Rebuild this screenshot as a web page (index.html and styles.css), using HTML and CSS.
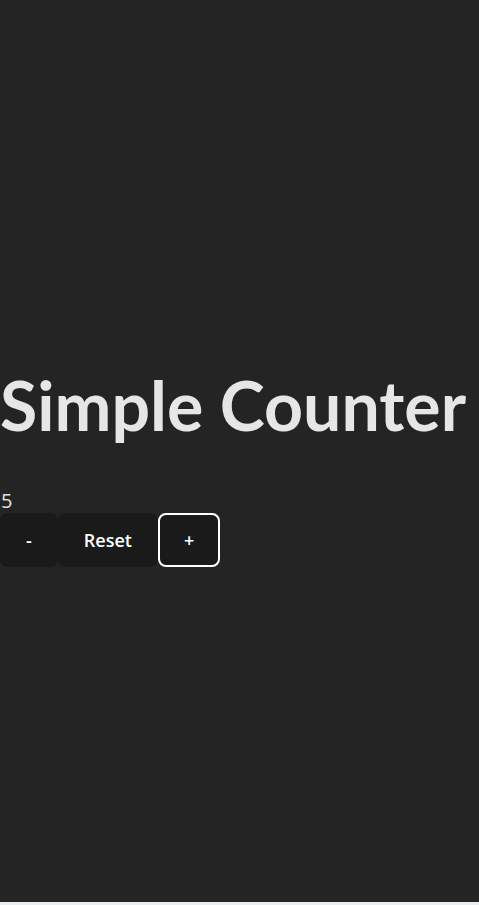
FILE: index.html
```html
<!DOCTYPE html>
<html lang="en">
<head>
<meta charset="utf-8">
<title>Simple Counter</title>
<link rel="stylesheet" href="styles.css">
</head>
<body>
<div class="app">
  <h1 class="title">Simple Counter</h1>
  <div class="count">5</div>
  <div class="controls">
    <button class="btn">-</button>
    <button class="btn">Reset</button>
    <button class="btn btn-focus">+</button>
  </div>
</div>
</body>
</html>
```
FILE: styles.css
```css
html {
  background: linear-gradient(to bottom, #242424 calc(100% - 3px), #e9eef2 calc(100% - 3px));
  min-height: 100%;
}
body {
  margin: 0;
  min-height: 905px;
  display: flex;
  flex-direction: column;
  font-family: "Open Sans", "Noto Sans", sans-serif;
  color: rgba(255, 255, 255, 0.87);
  background: transparent;
}
.app {
  padding-top: 340px;
}
.title {
  margin: 28px 0 47px;
  font-family: Lato, "Open Sans", sans-serif;
  font-size: 68px;
  line-height: 74px;
  font-weight: 700;
  white-space: nowrap;
  color: #e6e6e6;
}
.count {
  font-size: 20px;
  line-height: 24px;
  padding-left: 1px;
  color: #e1e1e1;
}
.controls {
  display: flex;
}
.btn {
  font-family: "Open Sans", "Noto Sans", sans-serif;
  font-size: 18px;
  font-weight: 600;
  line-height: 28px;
  padding: 11px 24px;
  border: 2px solid transparent;
  border-radius: 8px;
  background: #1a1a1a;
  color: #ffffff;
  cursor: pointer;
}
.btn-focus {
  border-color: #ffffff;
}
```
